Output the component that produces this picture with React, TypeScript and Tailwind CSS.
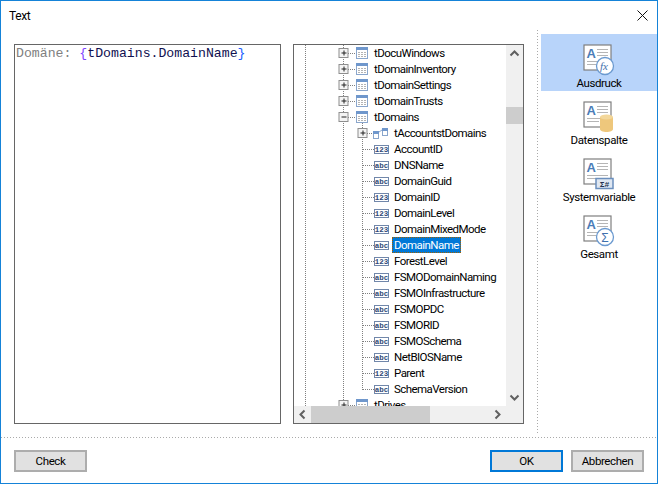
const UI_FONT = "font-['Roboto',sans-serif] tracking-[-0.4px]";

type Row = { label: string; kind: "table" | "open" | "relation" | "abc" | "123"; last?: boolean; selected?: boolean };

const ROWS: Row[] = [
  { label: "tDocuWindows", kind: "table" },
  { label: "tDomainInventory", kind: "table" },
  { label: "tDomainSettings", kind: "table" },
  { label: "tDomainTrusts", kind: "table" },
  { label: "tDomains", kind: "open" },
  { label: "tAccountstDomains", kind: "relation" },
  { label: "AccountID", kind: "123" },
  { label: "DNSName", kind: "abc" },
  { label: "DomainGuid", kind: "abc" },
  { label: "DomainID", kind: "123" },
  { label: "DomainLevel", kind: "123" },
  { label: "DomainMixedMode", kind: "123" },
  { label: "DomainName", kind: "abc", selected: true },
  { label: "ForestLevel", kind: "123" },
  { label: "FSMODomainNaming", kind: "abc" },
  { label: "FSMOInfrastructure", kind: "abc" },
  { label: "FSMOPDC", kind: "abc" },
  { label: "FSMORID", kind: "abc" },
  { label: "FSMOSchema", kind: "abc" },
  { label: "NetBIOSName", kind: "abc" },
  { label: "Parent", kind: "123" },
  { label: "SchemaVersion", kind: "abc", last: true },
  { label: "tDrives", kind: "table" },
];

const DOT = "#808080";

function Expander({ cx, open }: { cx: number; open?: boolean }) {
  return (
    <g>
      <rect x={cx - 4.5} y={3.5} width={9} height={9} fill="#f4f4f4" stroke="#8e8e8e" />
      <path d={`M${cx - 2} 8h5`} stroke="#222" />
      {!open && <path d={`M${cx + 0.5} 5.5v5`} stroke="#222" />}
    </g>
  );
}

function TableIcon({ x, y, size = 12 }: { x: number; y: number; size?: number }) {
  return (
    <g>
      <rect x={x + 0.5} y={y + 0.5} width={size - 1} height={size - 1} fill="#fff" stroke="#8aa6cc" />
      <rect x={x} y={y} width={size} height={3} fill="#6f97cc" />
      <path
        d={`M${x + 2} ${y + 5.5}h${size - 4}M${x + 2} ${y + 7.5}h${size - 4}M${x + 2} ${y + 9.5}h${size - 4}`}
        stroke="#b4b4b4"
        strokeDasharray="2 1"
      />
    </g>
  );
}

function TreeGutter({ row }: { row: Row }) {
  const { kind } = row;
  const isTable = kind === "table" || kind === "open";
  const isChild = !isTable;
  const width = isTable ? 78 : 98;
  return (
    <svg width={width} height={16} className="shrink-0">
      <path d="M11.5 0v16" stroke={DOT} strokeDasharray="1 1" />
      <path d="M49.5 0v16" stroke={DOT} strokeDasharray="1 1" />
      {isTable && <path d="M54 8.5h8" stroke={DOT} strokeDasharray="1 1" />}
      {kind === "open" && <path d="M68.5 14v2" stroke={DOT} strokeDasharray="1 1" />}
      {isChild && <path d={`M68.5 0v${row.last ? 9 : 16}`} stroke={DOT} strokeDasharray="1 1" />}
      {isTable && <Expander cx={49.5} open={kind === "open"} />}
      {isTable && <TableIcon x={62} y={2} />}
      {kind === "relation" && (
        <g>
          <rect x={64} y={4} width={9} height={9} fill="#fff" />
          <Expander cx={68.5} />
          <path d="M73 8.5h6" stroke={DOT} strokeDasharray="1 1" />
          <rect x={79.5} y={6.5} width={5} height={7} fill="#fff" stroke="#8aa6cc" />
          <rect x={79} y={6} width={6} height={3} fill="#6f97cc" />
          <path d="M85 7l3-2" stroke="#8aa6cc" />
          <rect x={88.5} y={3.5} width={5} height={7} fill="#fff" stroke="#8aa6cc" />
          <rect x={88} y={3} width={6} height={3} fill="#6f97cc" />
        </g>
      )}
      {(kind === "abc" || kind === "123") && (
        <g>
          <path d="M69 8.5h11" stroke={DOT} strokeDasharray="1 1" />
          <rect x={80.5} y={4.5} width={14} height={8} fill="#fff" stroke="#7187aa" />
          <text
            x={87.5}
            y={11}
            textAnchor="middle"
            fontSize={7.5}
            fontWeight={700}
            letterSpacing={0}
            fontFamily="'Liberation Mono', monospace"
            fill="#2f4a76"
          >
            {kind}
          </text>
        </g>
      )}
    </svg>
  );
}

function TreeRow({ row }: { row: Row }) {
  return (
    <div className="flex h-4 shrink-0 items-center whitespace-nowrap">
      <TreeGutter row={row} />
      {row.selected ? (
        <span className="h-4 bg-[#0078d7] px-[2px] leading-4 text-white outline-1 -outline-offset-1 outline-dotted outline-[#a06000]">
          {row.label}
        </span>
      ) : (
        <span className="ml-[2px] leading-4">{row.label}</span>
      )}
    </div>
  );
}

function Chevron({ d }: { d: string }) {
  return (
    <svg width={17} height={17} className="shrink-0">
      <path d={d} fill="none" stroke="#606060" strokeWidth={2} />
    </svg>
  );
}

function TreePanel() {
  return (
    <div className="flex h-[380px] w-[231px] flex-col border border-[#666] bg-white text-[11.5px] tracking-[-0.55px] text-black">
      <div className="flex min-h-0 flex-1">
        <div className="min-w-0 flex-1 overflow-hidden">
          {ROWS.map((row) => (
            <TreeRow key={row.label} row={row} />
          ))}
        </div>
        <div className="flex w-[17px] flex-col bg-[#f0f0f0]">
          <Chevron d="M4.5 10.5l4-4 4 4" />
          <div className="mt-[45px] h-[17px] bg-[#cdcdcd]" />
          <div className="flex-1" />
          <Chevron d="M4.5 6.5l4 4 4-4" />
        </div>
      </div>
      <div className="flex h-[17px] shrink-0 bg-[#f0f0f0]">
        <Chevron d="M10.5 4.5l-4 4 4 4" />
        <div className="h-[17px] w-[119px] bg-[#cdcdcd]" />
        <div className="flex-1" />
        <Chevron d="M6.5 4.5l4 4-4 4" />
        <div className="w-[17px]" />
      </div>
    </div>
  );
}

function DocIcon({ children }: { children: React.ReactNode }) {
  return (
    <svg width={32} height={32} viewBox="0 0 32 32" className="overflow-visible">
      <rect x={1} y={1} width={27} height={25} fill="#fff" stroke="#7f7f7f" strokeWidth={1.2} />
      <text
        x={3.5}
        y={14}
        fontSize={13}
        fontWeight={700}
        letterSpacing={0}
        fontFamily="'Liberation Sans', sans-serif"
        fill="#4a7db8"
      >
        A
      </text>
      <path d="M14 5.5h11M14 8.5h11M14 11.5h11M4 17.5h21M4 20.5h12" stroke="#b5b5b5" />
      {children}
    </svg>
  );
}

function SideItem({ label, active, children }: { label: string; active?: boolean; children: React.ReactNode }) {
  return (
    <div className={`flex h-[57px] flex-col items-center pt-[10px] ${active ? "bg-[#b8d4fa]" : ""}`}>
      <div className="h-[30px]">
        <DocIcon>{children}</DocIcon>
      </div>
      <span className="mt-[1px] text-[11.5px] leading-4 text-black">{label}</span>
    </div>
  );
}

function Button({ label, primary }: { label: string; primary?: boolean }) {
  return (
    <button
      className={`h-[22px] w-[73px] bg-[#e1e1e1] pt-px text-[11.5px] leading-none text-black ${
        primary ? "border-2 border-[#0078d7]" : "border-2 border-[#adadad]"
      }`}
    >
      {label}
    </button>
  );
}

export default function App() {
  return (
    <div className={`flex h-[484px] w-[658px] flex-col border border-[#1583d8] bg-white ${UI_FONT}`}>
      {/* Title bar */}
      <div className="flex h-[29px] shrink-0 items-center justify-between pl-[8px] pr-[9px] text-[12px] text-black">
        <span>Text</span>
        <svg width={11} height={11} viewBox="0 0 11 11">
          <path d="M0.5 0.5l10 10M10.5 0.5l-10 10" stroke="#111" />
        </svg>
      </div>

      {/* Body */}
      <div className="flex h-[404px] shrink-0">
        <div className="flex w-[536px] shrink-0 gap-3 pl-[13px] pt-[14px]">
          <div className="h-[380px] w-[267px] border border-[#666] bg-white pl-[1px] font-['Liberation_Mono',monospace] text-[13.2px] leading-[17px] tracking-normal whitespace-pre">
            <span className="text-[#808080]">Domäne: </span>
            <span className="text-[#8040ff]">{"{"}</span>
            <span className="text-[#101050]">tDomains.DomainName</span>
            <span className="text-[#2060ff]">{"}"}</span>
          </div>
          <TreePanel />
        </div>
        <div className="w-px shrink-0 bg-[repeating-linear-gradient(to_bottom,#aaa_0,#aaa_1px,transparent_1px,transparent_3px)]" />
        <div className="flex-1 pl-[3px] pt-[4px]">
          <SideItem label="Ausdruck" active>
            <circle cx={22} cy={22} r={8.5} fill="#fff" stroke="#6b9ad0" strokeWidth={1.3} />
            <text
              x={17}
              y={25.5}
              fontSize={11}
              fontStyle="italic"
              letterSpacing={0}
              fontFamily="'Liberation Serif', serif"
              fill="#3f70ad"
            >
              fx
            </text>
          </SideItem>
          <SideItem label="Datenspalte">
            <path d="M17 16v12c0 2 3 3 6.5 3s6.5-1 6.5-3V16z" fill="#eec77c" />
            <ellipse cx={23.5} cy={16} rx={6.5} ry={2.5} fill="#f3d79a" />
          </SideItem>
          <SideItem label="Systemvariable">
            <rect x={13} y={20.5} width={17} height={10} fill="#dfe7f2" stroke="#6b8fbd" strokeWidth={1.5} />
            <text
              x={21.5}
              y={28.5}
              textAnchor="middle"
              fontSize={8}
              fontWeight={700}
              letterSpacing={0}
              fontFamily="'Liberation Mono', monospace"
              fill="#24324f"
            >
              Σ#
            </text>
          </SideItem>
          <SideItem label="Gesamt">
            <circle cx={22} cy={22} r={8.5} fill="#fff" stroke="#6b9ad0" strokeWidth={1.3} />
            <text
              x={22}
              y={26.5}
              textAnchor="middle"
              fontSize={12}
              letterSpacing={0}
              fontFamily="'Liberation Sans', sans-serif"
              fill="#3f70ad"
            >
              Σ
            </text>
          </SideItem>
        </div>
      </div>

      {/* Footer */}
      <div className="mt-[3px] h-px shrink-0 bg-[repeating-linear-gradient(to_right,#aaa_0,#aaa_1px,transparent_1px,transparent_3px)]" />
      <div className="flex flex-1 items-start justify-between px-[13px] pt-[12px]">
        <Button label="Check" />
        <div className="flex gap-2">
          <Button label="OK" primary />
          <Button label="Abbrechen" />
        </div>
      </div>
    </div>
  );
}
